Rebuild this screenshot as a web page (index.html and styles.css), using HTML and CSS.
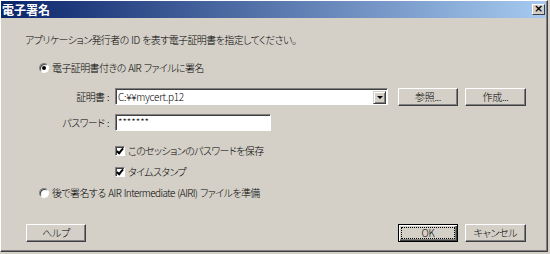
FILE: index.html
```html
<!DOCTYPE html>
<html>
	<head>
		<meta charset="UTF-8">
		<title>電子署名</title>
		<link rel="stylesheet" href="styles.css">
	</head>
	<body>
		<div class="window">
			<div class="titlebar">
				<span class="title">電子署名</span>
				<span class="close">×</span>
			</div>
			<div class="client">
				<p class="row intro">アプリケーション発行者の ID を表す電子証明書を指定してください。</p>
				<div class="row option"><span class="radio checked"></span>電子証明書付きの AIR ファイルに署名</div>
				<div class="row cert">
					<span class="label">証明書 :</span>
					<div class="combo">
						<span class="combo-text">C:¥¥mycert.p12</span>
						<span class="combo-btn"></span>
					</div>
					<span class="btn browse">参照...</span>
					<span class="btn create">作成...</span>
				</div>
				<div class="row pass">
					<span class="label">パスワード :</span>
					<div class="textbox">*******</div>
				</div>
				<div class="row check first"><span class="checkbox"></span>このセッションのパスワードを保存</div>
				<div class="row check"><span class="checkbox"></span>タイムスタンプ</div>
				<div class="row option last"><span class="radio"></span>後で署名する AIR Intermediate (AIRI) ファイルを準備</div>
				<div class="footer">
					<span class="btn help">ヘルプ</span>
					<span class="btn ok"><span class="focus">OK</span></span>
					<span class="btn cancel">キャンセル</span>
				</div>
			</div>
		</div>
	</body>
</html>
```
FILE: styles.css
```css
html,body{
	margin: 0;
	width: 100%;
	height: 100%;
}
body{
	background: #d4d0c8;
	font: 300 10px/14px "Noto Sans CJK JP", sans-serif;
	font-feature-settings: "palt";
	font-variant-east-asian: proportional-width;
	letter-spacing: -0.6px;
	word-spacing: 1px;
	color: #000;
}
p{
	margin: 0;
}
.window{
	width: 548px;
	height: 252px;
	box-sizing: border-box;
	border-top: 1px solid #fff;
	border-left: 1px solid #fff;
	border-right: 1px solid #404040;
	border-bottom: 1px solid #404040;
	box-shadow: inset -1px -1px 0 #808080;
	display: flex;
	flex-direction: column;
}
.titlebar{
	height: 17px;
	background: linear-gradient(to right, #0a246a, #a6caf0);
	display: flex;
	align-items: center;
	padding: 0 1px 0 1px;
	margin-right: 1px;
}
.title{
	color: #fff;
	font-weight: bold;
	font-size: 12px;
	letter-spacing: 0;
	flex: 1;
	font-feature-settings: normal;
	font-variant-east-asian: normal;
}
.close{
	width: 13px;
	height: 11px;
	box-sizing: border-box;
	background: #d4d0c8;
	border-top: 1px solid #fff;
	border-left: 1px solid #fff;
	border-right: 1px solid #404040;
	border-bottom: 1px solid #404040;
	font: bold 11px/8px "DejaVu Sans", sans-serif;
	letter-spacing: 0;
	text-align: center;
}
.client{
	display: flex;
	flex-direction: column;
	padding-left: 24px;
	padding-right: 21px;
}
.row{
	display: flex;
	align-items: center;
	height: 14px;
	white-space: nowrap;
}
.intro{
	margin-top: 15px;
}
.option{
	margin-top: 14px;
	margin-left: 14px;
}
.option.last{
	margin-top: 7px;
}
.radio{
	width: 10px;
	height: 10px;
	box-sizing: border-box;
	border-radius: 50%;
	background: #fff;
	border: 1px solid;
	border-color: #808080 #fff #fff #808080;
	box-shadow: inset 1px 1px 0 #404040;
	margin-right: 3px;
	display: flex;
	align-items: center;
	justify-content: center;
}
.radio.checked:after{
	content: "";
	width: 4px;
	height: 4px;
	border-radius: 50%;
	background: #000;
}
.cert{
	margin-top: 13px;
	height: 18px;
}
.label{
	width: 84px;
	text-align: right;
	margin-right: 6px;
}
.combo{
	width: 273px;
	height: 17px;
	box-sizing: border-box;
	background: #fff;
	border: 1px solid;
	border-color: #808080 #fff #fff #808080;
	box-shadow: inset 1px 1px 0 #404040;
	display: flex;
	align-items: center;
	padding: 1px 1px 0 2px;
	align-self: flex-start;
}
.combo-text{
	flex: 1;
	letter-spacing: -0.3px;
}
.combo-btn{
	width: 13px;
	height: 13px;
	box-sizing: border-box;
	background: #d4d0c8;
	border-top: 1px solid #d4d0c8;
	border-left: 1px solid #d4d0c8;
	border-right: 1px solid #404040;
	border-bottom: 1px solid #404040;
	box-shadow: inset 1px 1px 0 #fff, inset -1px -1px 0 #808080;
	position: relative;
}
.combo-btn:after{
	content: "";
	position: absolute;
	left: 3px;
	top: 4px;
	border-top: 3px solid #000;
	border-left: 3px solid transparent;
	border-right: 3px solid transparent;
}
.btn{
	width: 60px;
	height: 18px;
	box-sizing: border-box;
	background: #d4d0c8;
	border-top: 1px solid #fff;
	border-left: 1px solid #fff;
	border-right: 1px solid #404040;
	border-bottom: 1px solid #404040;
	box-shadow: inset -1px -1px 0 #808080;
	display: flex;
	align-items: center;
	justify-content: center;
	letter-spacing: -0.3px;
}
.browse{
	margin-left: 10px;
}
.create{
	margin-left: 7px;
	width: 61px;
}
.pass{
	margin-top: 8px;
	height: 17px;
}
.textbox{
	width: 156px;
	height: 17px;
	box-sizing: border-box;
	background: #fff;
	border: 1px solid;
	border-color: #808080 #fff #fff #808080;
	box-shadow: inset 1px 1px 0 #404040;
	padding: 1px 0 0 2px;
	font-size: 10px;
	line-height: 11px;
	letter-spacing: 0;
}
.check{
	margin-top: 7px;
	margin-left: 90px;
}
.check.first{
	margin-top: 13px;
}
.checkbox{
	width: 10px;
	height: 10px;
	box-sizing: border-box;
	background: #fff;
	border: 1px solid;
	border-color: #808080 #fff #fff #808080;
	box-shadow: inset 1px 1px 0 #404040;
	margin-right: 3px;
	position: relative;
}
.checkbox:after{
	content: "";
	position: absolute;
	left: 2px;
	top: 0px;
	width: 2px;
	height: 5px;
	border-right: 2px solid #000;
	border-bottom: 2px solid #000;
	transform: rotate(40deg);
}
.footer{
	margin-top: 24px;
	display: flex;
	height: 18px;
	padding-left: 1px;
}
.ok{
	margin-left: auto;
	border: 1px solid #000;
	box-shadow: inset 1px 1px 0 #fff, inset -1px -1px 0 #404040, inset -2px -2px 0 #808080;
	padding: 2px;
}
.focus{
	flex: 1;
	align-self: stretch;
	border: 1px dotted #000;
	display: flex;
	align-items: center;
	justify-content: center;
}
.cancel{
	margin-left: 7px;
	width: 61px;
}
```
